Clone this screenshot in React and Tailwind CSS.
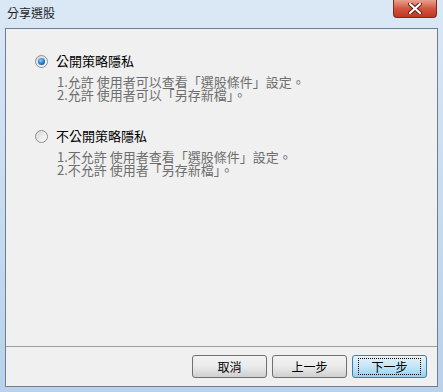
export default function App() {
  const font = { fontFamily: '"Noto Sans CJK TC", "Noto Sans CJK SC", sans-serif' };
  const Radio = ({ checked }) => (
    <span className="relative flex h-[13px] w-[13px] shrink-0 items-center justify-center rounded-full border border-[#8e8f8f] bg-gradient-to-br from-[#d6d6d6] to-[#ffffff]">
      {checked && (
        <span className="h-[7px] w-[7px] rounded-full bg-[radial-gradient(circle_at_40%_35%,#8ad0ff,#1a6ac4_60%,#0d3f86)]" />
      )}
    </span>
  );
  const Btn = ({ children, primary }) => (
    <div
      className={`flex h-[23px] w-[75px] items-center justify-center rounded-[3px] border text-[12px] text-black ${
        primary
          ? "border-[#3c7fb1] bg-gradient-to-b from-[#e5f4fc] via-[#c4e5f6] to-[#98d1ef]"
          : "border-[#707070] bg-gradient-to-b from-[#f2f2f2] via-[#ebebeb] to-[#cfcfcf]"
      }`}
    >
      <span
        className={`px-[12px] leading-[15px] ${primary ? "outline outline-1 outline-dotted outline-black" : ""}`}
      >
        {children}
      </span>
    </div>
  );
  return (
    <div
      className="flex h-[392px] w-[443px] flex-col overflow-hidden bg-gradient-to-b from-[#dbe8f6] via-[#c9dcf0] to-[#b9d1ea]"
      style={font}
    >
      <div className="flex h-[28px] shrink-0 items-start justify-between pl-[7px] pr-[6px]">
        <span className="mt-[6px] text-[12px] leading-[14px] text-[#1e1e1e]">分享選股</span>
        <div className="flex h-[18px] w-[44px] items-center justify-center rounded-b-[4px] border border-t-0 border-[#7a2a20] bg-gradient-to-b from-[#e8a18f] via-[#d1553e] to-[#c2361f]">
          <svg width="14" height="11" viewBox="0 0 14 11">
            <path d="M2 1 L12 10 M12 1 L2 10" stroke="#5a1b12" strokeWidth="4" strokeLinecap="round" />
            <path d="M2 1 L12 10 M12 1 L2 10" stroke="#ffffff" strokeWidth="2.2" strokeLinecap="round" />
          </svg>
        </div>
      </div>
      <div className="mx-[5px] mb-[5px] flex flex-1 flex-col border border-[#6d7f95] bg-[#f0f0f0]">
        <div className="flex flex-1 flex-col border-b border-[#a0a0a0] pl-[29px] pt-[24px]">
          <div className="flex items-center gap-[8px]">
            <Radio checked />
            <span className="text-[13px] leading-[16px] text-black">公開策略隱私</span>
          </div>
          <div className="mt-[6px] pl-[22px] text-[13px] leading-[13px] text-[#6d6d6d]">
            <div className="h-[13px] leading-[13px]">1.允許 使用者可以查看「選股條件」設定。</div>
            <div className="h-[13px] leading-[13px]">2.允許 使用者可以「另存新檔」。</div>
          </div>
          <div className="mt-[27px] flex items-center gap-[8px]">
            <Radio />
            <span className="text-[13px] leading-[16px] text-black">不公開策略隱私</span>
          </div>
          <div className="mt-[6px] pl-[22px] text-[13px] leading-[13px] text-[#6d6d6d]">
            <div className="h-[13px] leading-[13px]">1.不允許 使用者查看「選股條件」設定。</div>
            <div className="h-[13px] leading-[13px]">2.不允許 使用者「另存新檔」。</div>
          </div>
        </div>
        <div className="flex h-[39px] shrink-0 items-center justify-end gap-[5px] pr-[10px]">
          <Btn>取消</Btn>
          <Btn>上一步</Btn>
          <Btn primary>下一步</Btn>
        </div>
      </div>
    </div>
  );
}
